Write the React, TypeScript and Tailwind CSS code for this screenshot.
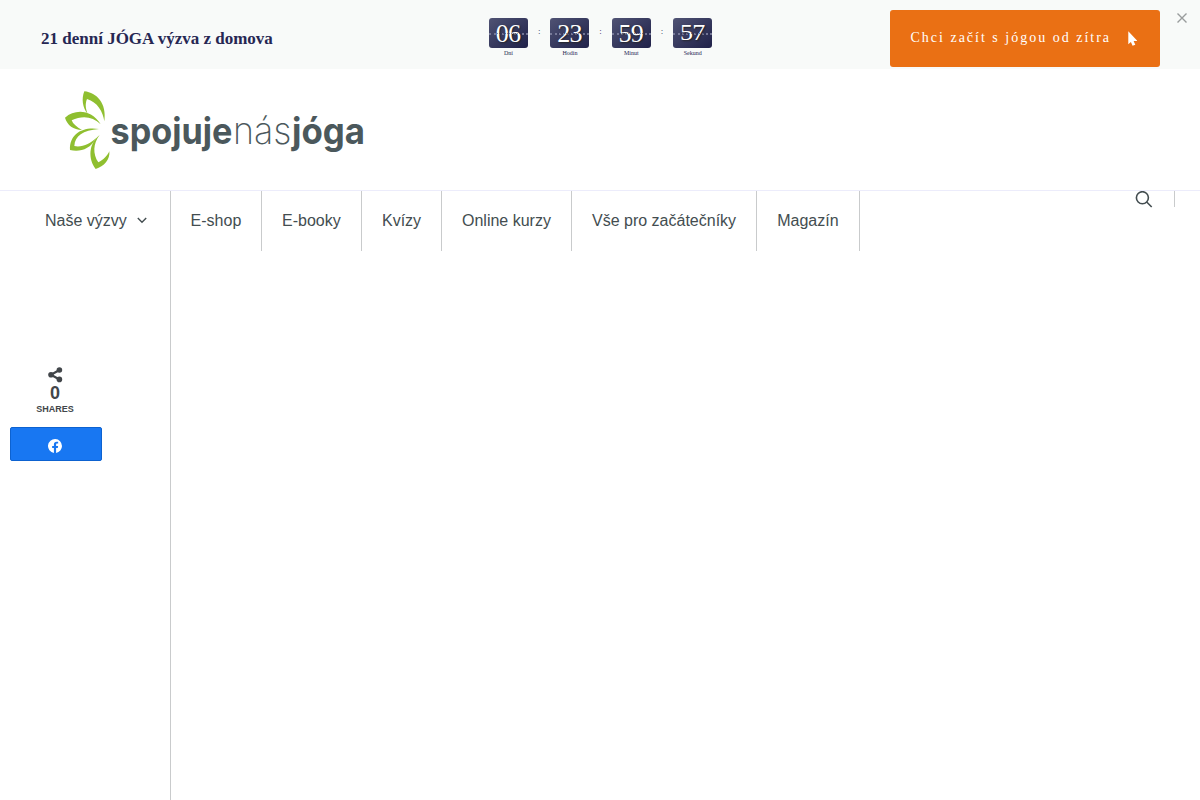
import React from "react";

const countdown = [
  { value: "06", label: "Dní" },
  { value: "23", label: "Hodin" },
  { value: "59", label: "Minut" },
  { value: "57", label: "Sekund" },
];

const menu = [
  { name: "E-shop", width: "w-[91px]", padding: "pl-[19.6px]" },
  { name: "E-booky", width: "w-[100px]", padding: "pl-[20px]" },
  { name: "Kvízy", width: "w-[80px]", padding: "pl-[20px]" },
  { name: "Online kurzy", width: "w-[130px]", padding: "pl-[20px]" },
  { name: "Vše pro začátečníky", width: "w-[185px]", padding: "pl-[20px]" },
  { name: "Magazín", width: "w-[103px]", padding: "pl-[20.2px]" },
];

const Logo = () => (
  <svg width="310" height="90" viewBox="0 0 310 90" className="block">
    {/* Petals */}
    <g fill="#8fbf30" transform="translate(0 -4) scale(0.33333)">
      <path d="M73 16 C110 20 141 52 133 106 C129 77 112 48 81 39 C74 56 78 72 84 85 C67 66 64 38 73 16Z" />
      <path d="M15 95 C45 68 95 70 122 115 C98 92 68 88 35 103 C39 114 50 123 66 132 C40 131 22 118 15 95Z" />
      <path d="M117 129 C68 121 28 143 30 192 C58 198 90 192 108 156 C92 173 65 185 43 180 C45 149 68 133 117 129Z" />
      <path d="M119 147 C85 172 84 220 107 249 C132 242 151 220 148 196 C143 208 131 222 115 229 C98 205 99 172 119 147Z" />
    </g>
    {/* Wordmark */}
    <g fill="#4b585c" fontFamily="Inter, sans-serif" fontSize="37">
      <text x="50.5" y="54" fontWeight="700" textLength="122" lengthAdjust="spacingAndGlyphs">
        spojuje
      </text>
      <text x="173" y="54" fontWeight="200" textLength="58.5" lengthAdjust="spacingAndGlyphs">
        nás
      </text>
      <text x="232" y="54" fontWeight="700" textLength="73" lengthAdjust="spacingAndGlyphs">
        jóga
      </text>
    </g>
  </svg>
);

const Countdown = () => (
  <div className="flex pt-[18px]">
    {countdown.map((item, index) => (
      <React.Fragment key={item.label}>
        <div className="w-[39px] text-center text-[#262753]">
          <div className="relative h-[30px] rounded-[3px] bg-linear-to-br from-[#505374] to-[#202149] text-[26px] tracking-[-0.8px] text-white [text-shadow:1px_1px_2px_#222]">
            <div className="absolute inset-x-0 top-[15px] border-t-2 border-dotted border-[#8587a5]/80" />
            <div
              className={`relative -left-[0.5px] leading-[32px] ${
                index === 3 ? "origin-[50%_7px] scale-y-90" : ""
              }`}
            >
              {item.value}
            </div>
            <div className="absolute inset-x-[8px] top-[15px] border-t border-dotted border-[#262753]/50" />
          </div>
          <div className="mt-[1px] text-[6px] leading-[8px]">{item.label}</div>
        </div>
        {index < countdown.length - 1 && (
          <div className="w-[22.4px] pt-[8px] text-center text-[9px] leading-[10px] text-[#262753]">
            :
          </div>
        )}
      </React.Fragment>
    ))}
  </div>
);

const App = () => {
  return (
    <div className="flex h-[800px] w-full flex-col overflow-hidden bg-white font-['Liberation_Sans',Arial,sans-serif] text-[#434d50]">
      {/* Promo bar */}
      <div className="relative flex h-[69px] shrink-0 bg-[#f8faf9] font-['Liberation_Serif',serif]">
        <div className="w-[489px] pt-[27px] pl-[41px] text-[17px] leading-[24px] font-bold text-[#262753]">
          21 denní JÓGA výzva z domova
        </div>
        <Countdown />
        <a className="mt-[10px] mr-[40px] ml-auto flex h-[57px] w-[270px] items-center rounded-[3px] bg-[#ea7014] pl-[20.5px] text-[14px] tracking-[2px] text-white">
          <span className="w-[217.5px] whitespace-nowrap pb-[2px]">Chci začít s jógou od zítra</span>
          <svg className="mb-[1px]" width="9" height="15" viewBox="0 0 9 15" fill="#fff">
            <path d="M.3.3v13l2.6-2.3 1.7 3.8 2.7-1.1-1.7-3.8H9.4z" />
          </svg>
        </a>
        <svg
          className="absolute top-[13px] right-[13px]"
          width="10"
          height="10"
          viewBox="0 0 10 10"
          stroke="#999c9c"
          strokeWidth="1.4"
        >
          <path d="M.5.5l9 9M9.5.5l-9 9" />
        </svg>
      </div>

      {/* Header */}
      <header className="h-[122px] shrink-0 border-b border-[#ececfb] pt-[21px] pl-[60px]">
        <Logo />
      </header>

      {/* Navigation */}
      <div className="flex flex-1">
        <div className="flex w-[171px] shrink-0 flex-col border-r border-[#c9cbcc]">
          <a className="flex h-[60px] items-center pl-[45px] text-[16px]">
            Naše výzvy
            <svg
              className="mb-[2px] ml-[10px]"
              width="10"
              height="7"
              viewBox="0 0 10 7"
              fill="none"
              stroke="currentColor"
              strokeWidth="1.4"
            >
              <path d="M.8 1L5 5.2 9.2 1" />
            </svg>
          </a>

          {/* Share buttons */}
          <div className="mt-[116px] ml-[10px] flex w-[92px] flex-col text-[#42464a]">
            <div className="flex w-[90px] flex-col items-center">
              <svg width="16" height="16" viewBox="0 0 16 16" fill="currentColor">
                <path d="M12 3.2L4 7.7l8 4.5" fill="none" stroke="currentColor" strokeWidth="2.2" />
                <circle cx="12.4" cy="3" r="2.8" />
                <circle cx="4" cy="7.7" r="2.8" />
                <circle cx="12.4" cy="12.4" r="2.8" />
              </svg>
              <div className="text-[18px] leading-[20px] font-bold">0</div>
              <div className="text-[9px] leading-[12px] font-bold">SHARES</div>
            </div>
            <a className="mt-[12px] flex h-[34px] items-center rounded-[2px] border border-[#0d62d0] bg-[#1877f2] pt-[3px] pl-[37px]">
              <svg width="14" height="14" viewBox="0 0 24 24" fill="#fff">
                <path d="M24 12a12 12 0 1 0-13.9 11.9v-8.4H7.1V12h3V9.4c0-3 1.8-4.7 4.6-4.7 1.3 0 2.7.2 2.7.2v3h-1.5c-1.5 0-2 .9-2 1.9V12h3.4l-.5 3.5h-2.9v8.4A12 12 0 0 0 24 12z" />
              </svg>
            </a>
          </div>
        </div>

        <nav className="flex h-[60px]">
          {menu.map((item) => (
            <a
              key={item.name}
              className={`flex shrink-0 items-center whitespace-nowrap border-r border-[#c9cbcc] text-[16px] ${item.width} ${item.padding}`}
            >
              {item.name}
            </a>
          ))}
        </nav>

        <div className="mr-[25px] ml-auto flex h-[16px] w-[40px] border-r border-[#c9cbcc]">
          <svg
            className="shrink-0"
            width="18"
            height="17"
            viewBox="0 0 18 17"
            fill="none"
            stroke="#434d50"
            strokeWidth="1.6"
          >
            <circle cx="7.4" cy="6.7" r="6" />
            <path d="M11.7 11l5 5" />
          </svg>
        </div>
      </div>
    </div>
  );
};

export default App;
